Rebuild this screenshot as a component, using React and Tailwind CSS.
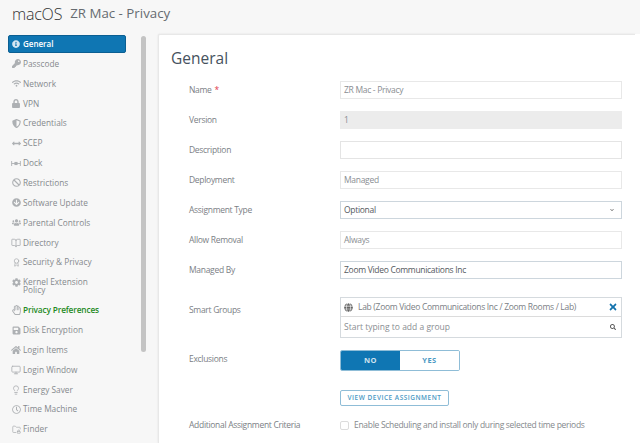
import React from 'react'
import {FaInfoCircle, FaKey, FaWifi, FaLock, FaShieldAlt, FaBan, FaArrowCircleDown, FaUsers, FaCog, FaRegHandPaper, FaSave, FaHome, FaRegClock, FaTimes, FaSearch, FaChevronDown, FaGlobe, FaArrowsAltH} from 'react-icons/fa'
import {BookOpen, Award, Monitor, Lightbulb, FolderLock} from 'lucide-react'

const Dock = (props) => (
	<svg viewBox="0 0 16 10" {...props}>
		<path d="M1 1v8M15 1v8M1 5h14" stroke="currentColor" strokeWidth="1.4" fill="none"/>
		<rect x="5.5" y="2.5" width="5" height="5" fill="currentColor"/>
	</svg>
)

const items = [
	{label: 'Passcode', Icon: FaKey, size: 'w-[9px] h-[9px]'},
	{label: 'Network', Icon: FaWifi, size: 'w-[9px] h-[9px]'},
	{label: 'VPN', Icon: FaLock, size: 'w-[8px] h-[9px]'},
	{label: 'Credentials', Icon: FaShieldAlt, size: 'w-[9px] h-[9px]'},
	{label: 'SCEP', Icon: FaArrowsAltH, size: 'w-[9px] h-[9px]'},
	{label: 'Dock', Icon: Dock, size: 'w-[10px] h-[7px]'},
	{label: 'Restrictions', Icon: FaBan, size: 'w-[9px] h-[9px]'},
	{label: 'Software Update', Icon: FaArrowCircleDown, size: 'w-[9px] h-[9px]'},
	{label: 'Parental Controls', Icon: FaUsers, size: 'w-[9px] h-[9px]'},
	{label: 'Directory', Icon: BookOpen, size: 'w-[10px] h-[10px]'},
	{label: 'Security & Privacy', Icon: Award, size: 'w-[9px] h-[11px]'},
	{label: 'Kernel Extension Policy', Icon: FaCog, size: 'w-[9px] h-[9px]', tall: true},
	{label: 'Privacy Preferences', Icon: FaRegHandPaper, size: 'w-[9px] h-[10px]', active: true},
	{label: 'Disk Encryption', Icon: FaSave, size: 'w-[9px] h-[9px]'},
	{label: 'Login Items', Icon: FaHome, size: 'w-[10px] h-[10px]'},
	{label: 'Login Window', Icon: Monitor, size: 'w-[10px] h-[10px]'},
	{label: 'Energy Saver', Icon: Lightbulb, size: 'w-[10px] h-[12px]'},
	{label: 'Time Machine', Icon: FaRegClock, size: 'w-[9px] h-[9px]'},
	{label: 'Finder', Icon: FolderLock, size: 'w-[9px] h-[9px]'},
]

const smallText = 'text-[8.5px] tracking-[-0.3px]'
const inputBase = `w-[282px] h-[18px] flex items-center px-[3px] border ${smallText}`

const Row = ({label, required, children, className = 'h-[30px]', labelClass = ''}) => (
	<div className={`flex items-center ${className}`}>
		<div className={`w-[151px] text-[#7b8085] ${smallText} ${labelClass}`}>
			{label}
			{required && <span className="text-[#e0394a] ml-[3px]">*</span>}
		</div>
		{children}
	</div>
)

export default function App() {
	return (
		<div className="w-[640px] h-[443px] overflow-hidden bg-[#f7f7f7] font-['Open_Sans',sans-serif]">
			<header className="h-[34px] flex items-center pl-[12px] gap-[8px] pb-[6px]">
				<span className="text-[16px] font-light text-[#333] tracking-[-0.2px]">macOS</span>
				<span className="text-[13.3px] text-[#666b70]">ZR Mac - Privacy</span>
			</header>
			<div className="flex">
				<aside className="w-[141px] shrink-0 pl-[8px]">
					<div className="w-[118px] h-[18px] mt-[1px] rounded-[2px] bg-[#0f76b3] border border-[#0b5f92] flex items-center gap-[3px] pl-[3px] text-white text-[8px] font-semibold">
						<FaInfoCircle className="w-[8px] h-[8px] text-[#d5e6f2]"/>
						General
					</div>
					<nav className="mt-[1px]">
						{items.map(({label, Icon, size, active, tall}) => (
							<div key={label} className={`flex pl-[3px] text-[8.3px] leading-[8px] ${tall ? 'h-[28px] items-start pt-[6px]' : 'h-[19.85px] items-center'} ${active ? 'text-[#1e8a1e] font-semibold tracking-[-0.15px]' : 'text-[#85898d]'}`}>
								<span className="w-[12px] shrink-0 pr-[2px] flex justify-center">
									<Icon className={`${size} text-[#adb0b3]`}/>
								</span>
								<span className={tall ? 'w-[70px]' : ''}>{label}</span>
							</div>
						))}
					</nav>
				</aside>
				<div className="w-[5px] h-[316px] rounded-[3px] bg-[#c4c4c4] shrink-0 mt-[2px]"></div>
				<main className="ml-[12px] w-[477px] bg-white border-l border-t border-[#e8e8e8] rounded-tl-[2px] pl-[12px] h-[409px] shadow-[0_0_2px_#ddd]">
					<h1 className="text-[15.5px] text-[#46525e] mt-[11px] h-[26px] leading-[24px]">General</h1>
					<div className="pl-[18px] mt-[3px]">
						<Row label="Name" required>
							<div className={`${inputBase} bg-white border-[#e8e8e8] text-[#8a8e92]`}>ZR Mac - Privacy</div>
						</Row>
						<Row label="Version">
							<div className={`${inputBase} bg-[#ececec] border-[#ececec] text-[#8a8e92]`}>1</div>
						</Row>
						<Row label="Description">
							<div className={`${inputBase} bg-white border-[#e4e4e4]`}></div>
						</Row>
						<Row label="Deployment">
							<div className={`${inputBase} bg-white border-[#e8e8e8] text-[#8a8e92]`}>Managed</div>
						</Row>
						<Row label="Assignment Type">
							<div className={`${inputBase} bg-white border-[#cdd6dd] text-[#55595e] justify-between`}>
								Optional
								<FaChevronDown className="w-[4px] h-[4px] text-[#666] mr-[4px]"/>
							</div>
						</Row>
						<Row label="Allow Removal">
							<div className={`${inputBase} bg-white border-[#e8e8e8] text-[#8a8e92]`}>Always</div>
						</Row>
						<Row label="Managed By">
							<div className={`${inputBase} bg-white border-[#cdd6dd] text-[#55595e]`}>Zoom Video Communications Inc</div>
						</Row>
						<div className="flex mt-[12px]">
							<div className={`w-[151px] text-[#7b8085] pt-[7px] ${smallText}`}>Smart Groups</div>
							<div className="w-[282px] h-[41px] border border-[#d5dade] bg-white">
								<div className={`h-[19px] flex items-center pl-[3px] pr-[3px] border-b border-[#dcdcdc] text-[#7b8085] ${smallText}`}>
									<FaGlobe className="w-[9px] h-[9px] text-[#666] mr-[5px]"/>
									<span className="flex-1">Lab (Zoom Video Communications Inc / Zoom Rooms / Lab)</span>
									<FaTimes className="w-[10px] h-[10px] text-[#1272ad]"/>
								</div>
								<div className="h-[20px] flex items-center pl-[3px] pr-[5px] justify-between text-[#8a8e92] text-[8.5px]">
									Start typing to add a group
									<FaSearch className="w-[6px] h-[6px] text-[#555]"/>
								</div>
							</div>
						</div>
						<Row label="Exclusions" className="h-[21px] mt-[12px]" labelClass="pb-[3px]">
							<div className="w-[120px] h-[21px] flex rounded-[2px] border border-[#8fbdd7] text-[7.5px] font-bold tracking-[0.5px] overflow-hidden">
								<div className="w-[60px] bg-[#0f76b3] text-[#cfe3ef] flex items-center justify-center">NO</div>
								<div className="w-[60px] bg-white text-[#4a99c4] flex items-center justify-center">YES</div>
							</div>
						</Row>
						<div className="ml-[151px] mt-[19px] w-[109px] h-[16px] border border-[#8fbdd7] rounded-[2px] text-[#4a99c4] text-[6.5px] font-semibold tracking-[0.5px] flex items-center justify-center">VIEW DEVICE ASSIGNMENT</div>
						<Row label="Additional Assignment Criteria" className="h-[14px] mt-[12px]">
							<div className="w-[9px] h-[9px] border border-[#dcdcdc] rounded-[2px] mr-[5px]"></div>
							<span className={`text-[#85898d] ${smallText}`}>Enable Scheduling and install only during selected time periods</span>
						</Row>
					</div>
				</main>
				<div className="flex-1 bg-white"></div>
			</div>
		</div>
	)
}
